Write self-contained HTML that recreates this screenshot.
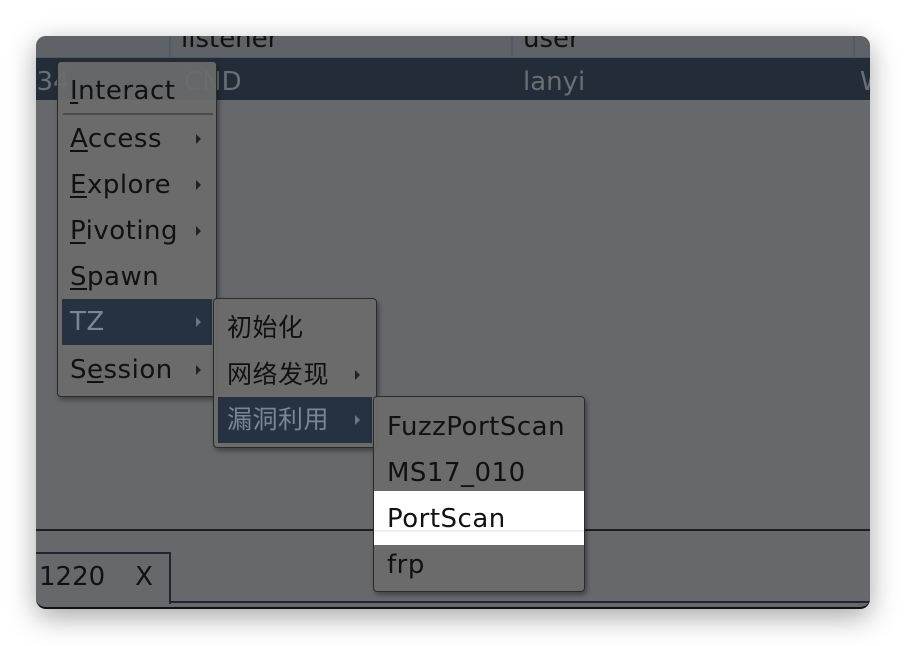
<!DOCTYPE html>
<html><head><meta charset="utf-8"><style>
*{margin:0;padding:0;box-sizing:border-box}
body{width:906px;height:646px;background:#fff;position:relative;overflow:hidden;font-family:"DejaVu Sans","Liberation Sans","Noto Sans CJK SC",sans-serif;color:#111}
.win{position:absolute;left:36px;top:36px;width:834px;height:573px;background:#67686b;border-radius:10px;overflow:hidden;box-shadow:0 8px 28px rgba(0,0,0,.35);border-bottom:2px solid #111}
.a{position:absolute;white-space:nowrap}
.menu{position:absolute;background:rgba(108,108,108,.93);border:1.5px solid #2a2a2a;border-radius:4px;box-shadow:2px 3px 5px rgba(0,0,0,.35)}
.it{position:absolute;left:0;right:0;height:46px;line-height:46px;font-size:26px;white-space:nowrap;letter-spacing:0.5px}
.hl{background:#263242;color:#7b8594}
.arr{position:absolute;width:0;height:0;border-left:5px solid #222;border-top:5px solid transparent;border-bottom:5px solid transparent;top:18px}
.hl .arr{border-left-color:#6c7582}
u{text-decoration:underline;text-underline-offset:3px}
</style></head><body>
<div class="win">
 <div class="a" style="left:0;top:0;width:834px;height:22px;background:#5f6266;border-bottom:1px solid #4c5868"></div>
 <div class="a" style="left:133px;top:0;width:2px;height:22px;background:#4f5b6b"></div>
 <div class="a" style="left:475px;top:0;width:2px;height:22px;background:#4f5b6b"></div>
 <div class="a" style="left:817px;top:0;width:2px;height:22px;background:#4f5b6b"></div>
 <div class="a" style="left:145px;top:-12px;font-size:26px;line-height:30px">listener</div>
 <div class="a" style="left:487px;top:-12px;font-size:26px;line-height:30px">user</div>
 <div class="a" style="left:0;top:22px;width:834px;height:42px;background:#232d3a"></div>
 <div class="a" style="left:-16px;top:31px;font-size:26px;line-height:30px;color:#6b6e72">134</div>
 <div class="a" style="left:148px;top:31px;font-size:26px;line-height:30px;color:#6b6e72">CND</div>
 <div class="a" style="left:487px;top:31px;font-size:26px;line-height:30px;color:#6b6e72">lanyi</div>
 <div class="a" style="left:824px;top:31px;font-size:26px;line-height:30px;color:#6b6e72">W</div>
 <div class="a" style="left:0;top:493px;width:834px;height:2px;background:#1e1e1e"></div>
 <div class="a" style="left:0;top:516px;width:135px;height:52px;border-top:2px solid #1e2633;border-right:2px solid #1e2633"></div>
 <div class="a" style="left:135px;top:565px;width:700px;height:2px;background:#1e2633"></div>
 <div class="a" style="left:3px;top:524px;font-size:26px;line-height:34px">1220<span style="display:inline-block;width:30px"></span>X</div>
</div>

<div class="menu" style="left:57px;top:61px;width:160px;height:336px">
 <div class="it" style="top:6px;padding-left:12px"><u>I</u>nteract</div>
 <div class="a" style="left:5px;top:51px;width:150px;height:2px;background:#4a4a4a"></div>
 <div class="it" style="top:54px;padding-left:12px"><u>A</u>ccess<span class="arr" style="left:138px"></span></div>
 <div class="it" style="top:100px;padding-left:12px"><u>E</u>xplore<span class="arr" style="left:138px"></span></div>
 <div class="it" style="top:146px;padding-left:12px"><u>P</u>ivoting<span class="arr" style="left:138px"></span></div>
 <div class="it" style="top:192px;padding-left:12px"><u>S</u>pawn</div>
 <div class="it hl" style="top:237px;left:4px;right:4px;padding-left:8px">TZ<span class="arr" style="left:134px"></span></div>
 <div class="it" style="top:285px;padding-left:12px">S<u>e</u>ssion<span class="arr" style="left:138px"></span></div>
</div>

<div class="menu" style="left:213px;top:298px;width:164px;height:150px">
 <div class="it" style="top:6px;padding-left:13px;font-size:25px">初始化</div>
 <div class="it" style="top:53px;padding-left:13px;font-size:25px">网络发现<span class="arr" style="left:141px"></span></div>
 <div class="it hl" style="top:98px;left:4px;right:4px;padding-left:9px;font-size:25px">漏洞利用<span class="arr" style="left:137px"></span></div>
</div>

<div class="menu" style="left:373px;top:396px;width:212px;height:196px">
 <div class="it" style="top:7px;padding-left:13px">FuzzPortScan</div>
 <div class="it" style="top:53px;padding-left:13px">MS17_010</div>
 <div class="a" style="left:0;right:0;top:94px;height:54px;background:#fff"></div>
 <div class="a" style="left:0;right:0;top:133px;height:2px;background:#eee"></div>
 <div class="it" style="top:99px;padding-left:13px">PortScan</div>
 <div class="it" style="top:145px;padding-left:13px">frp</div>
</div>
</body></html>
